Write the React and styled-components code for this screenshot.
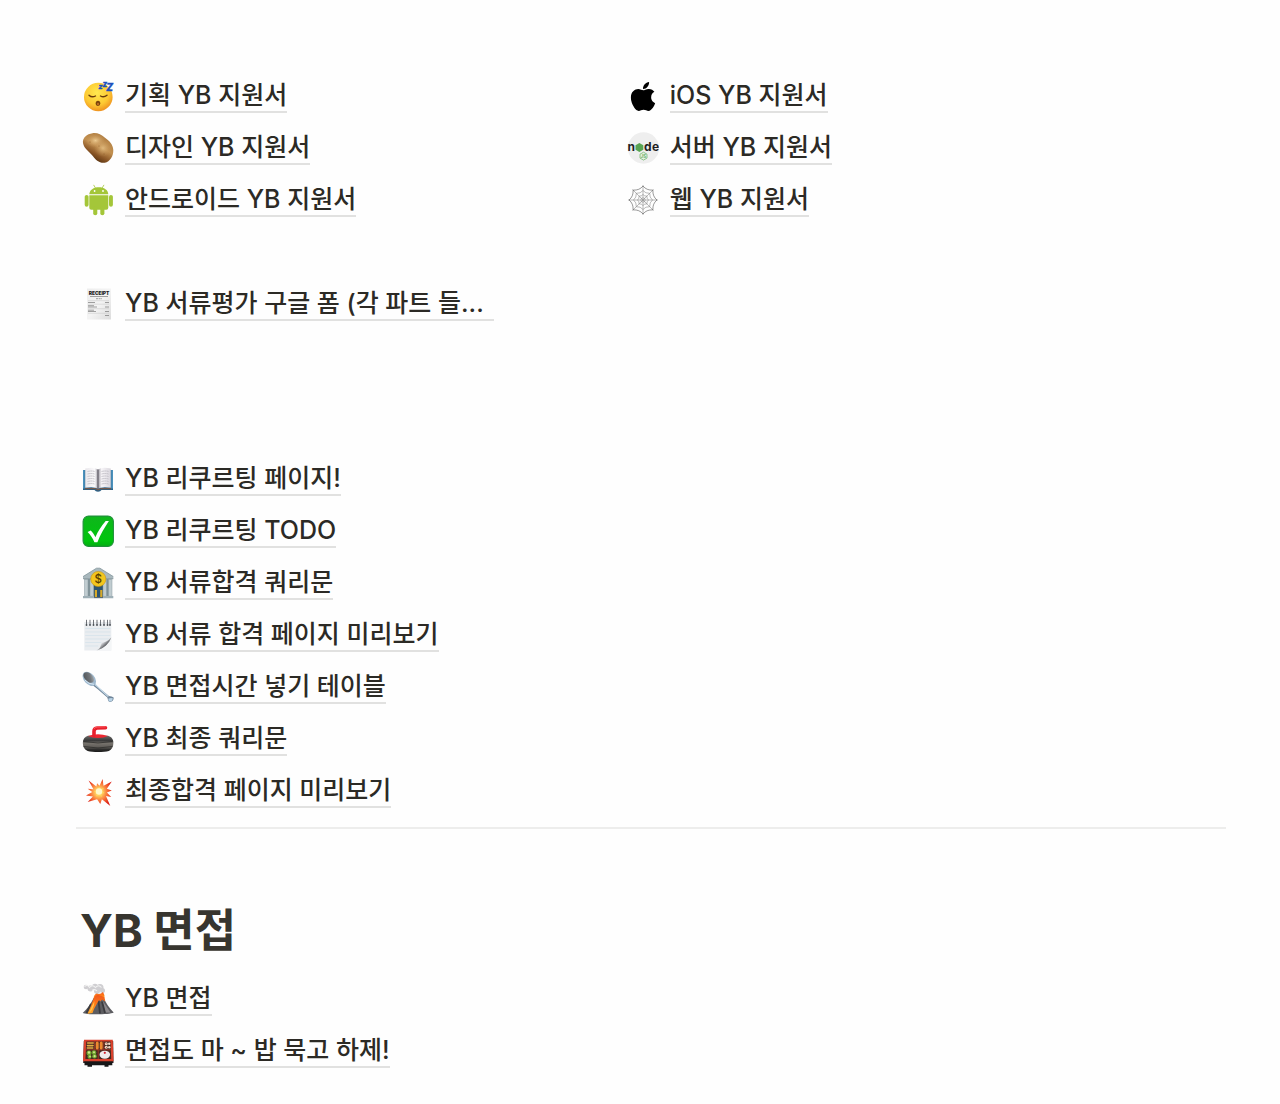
import React from "react";
import styled, { createGlobalStyle } from "styled-components";
import { FaApple } from "react-icons/fa";

function SleepingIcon() {
    return (
        <Icon viewBox="0 0 32 32">
            <defs>
                <radialGradient id="face" cx="45%" cy="35%" r="65%">
                    <stop offset="0" stopColor="#ffe94f" />
                    <stop offset="0.65" stopColor="#fdc933" />
                    <stop offset="1" stopColor="#ef9320" />
                </radialGradient>
            </defs>
            <circle cx="16.3" cy="17" r="14.3" fill="url(#face)" />
            <g fill="none" stroke="#6b3c0c" strokeWidth="1.4" strokeLinecap="round">
                <path d="M7 15.2q2.8 2.8 6.5 .8" />
                <path d="M18.5 16q3.2 2 6.5-.8" />
            </g>
            <ellipse cx="16" cy="23.3" rx="2.3" ry="2.6" fill="#7a430c" />
            <ellipse cx="16" cy="24" rx="1.1" ry="1.2" fill="#b96a20" />
            <g
                fill="#1d50bd"
                stroke="#1d50bd"
                strokeWidth="0.4"
                fontFamily="Inter, sans-serif"
                fontWeight="800"
                fontStyle="italic"
            >
                <text x="16.5" y="9" fontSize="7">z</text>
                <text x="20.5" y="7" fontSize="8">z</text>
                <text x="24.2" y="10.5" fontSize="10">Z</text>
            </g>
        </Icon>
    );
}

function PotatoIcon() {
    return (
        <Icon viewBox="0 0 32 32">
            <defs>
                <linearGradient id="potato" x1="0.75" y1="0.1" x2="0.3" y2="0.9">
                    <stop offset="0" stopColor="#b07e42" />
                    <stop offset="0.45" stopColor="#c29050" />
                    <stop offset="0.75" stopColor="#8a5626" />
                    <stop offset="1" stopColor="#54300f" />
                </linearGradient>
                <radialGradient id="potatoShine">
                    <stop offset="0" stopColor="#ecca90" />
                    <stop offset="1" stopColor="#c8975a" stopOpacity="0" />
                </radialGradient>
            </defs>
            <path
                d="M10.5 1.200c5-.7 8.500 1.600 12.500 4.500 4.500 3.200 8 6.500 8.300 12.300.2 6-3.300 11.800-8.500 12.700-5.500.6-9.300-2.700-12-6.700C7.500 19.500 2 17 1 11 .2 5.800 5 1.900 10.500 1.200z"
                fill="url(#potato)"
            />
            <ellipse cx="13.5" cy="8.5" rx="10" ry="7" fill="url(#potatoShine)" />
            <ellipse cx="21" cy="16" rx="9" ry="9" fill="url(#potatoShine)" opacity="0.7" />
            <g fill="#8c5a2a">
                <circle cx="8" cy="10" r="0.5" />
                <circle cx="17" cy="14" r="0.5" />
                <circle cx="22" cy="22" r="0.5" />
            </g>
        </Icon>
    );
}

function AndroidIcon() {
    return (
        <Icon viewBox="0 0 32 32" fill="#a4c639">
            <path d="M7.3 10.2C7.6 6 11.5 3.3 16.8 3.3s9.2 2.7 9.500 6.900z" />
            <path
                d="M11.8 1.200l1.900 3.200M21.800 1.200l-1.900 3.200"
                stroke="#a4c639"
                strokeWidth="0.8"
                strokeLinecap="round"
            />
            <circle cx="12.6" cy="7" r="0.9" fill="#fff" />
            <circle cx="21" cy="7" r="0.9" fill="#fff" />
            <path d="M7.3 11.200h19v12.600a2 2 0 0 1-2 2h-15a2 2 0 0 1-2-2z" />
            <rect x="2.7" y="10.9" width="3.9" height="11.8" rx="1.95" />
            <rect x="27" y="10.9" width="3.9" height="11.8" rx="1.95" />
            <rect x="11.2" y="22" width="4.1" height="9.3" rx="2.05" />
            <rect x="18.3" y="22" width="4.1" height="9.3" rx="2.05" />
        </Icon>
    );
}

function AppleIcon() {
    return (
        <LogoBox>
            <FaApple size={33} />
        </LogoBox>
    );
}

function NodeIcon() {
    return (
        <Icon viewBox="0 0 32 32">
            <circle cx="16.5" cy="16" r="15.7" fill="#eeeeee" />
            <g
                fill="#1f1f1f"
                fontFamily="Inter, sans-serif"
                fontWeight="700"
                fontSize="12"
            >
                <text x="0.4" y="18.5">n</text>
                <text x="17" y="18.5">d</text>
                <text x="25" y="18.5">e</text>
            </g>
            <path d="M12.4 11l3.900 2.200v4.500l-3.900 2.200-3.900-2.200v-4.500z" fill="#58a452" />
            <path
                d="M16.5 20.200l3.500 2v3.900l-3.500 2-3.500-2v-3.900z"
                fill="#e3f0e2"
                stroke="#83bf7e"
                strokeWidth="0.9"
            />
            <text
                x="16.5"
                y="25.8"
                fontSize="4.4"
                fontWeight="700"
                textAnchor="middle"
                fontFamily="Inter, sans-serif"
                fill="#69ad63"
            >
                JS
            </text>
        </Icon>
    );
}

function WebIcon() {
    return (
        <Icon viewBox="0 0 32 32" fill="none" stroke="#8a8a8a" strokeWidth="0.6">
            <path d="M16 1v30M1 16h30M5.400 5.400l21.200 21.200M26.600 5.400L5.400 26.600" />
            <path
                stroke="#555"
                d="M16 2q3.500 4.500 9.900 4.100Q25.500 12.500 30 16q-4.500 3.500-4.100 9.900Q19.500 25.500 16 30q-3.500-4.500-9.900-4.100Q6.500 19.500 2 16q4.500-3.500 4.100-9.900Q12.500 6.500 16 2z"
            />
            <path d="M16 6.500q2.500 3.200 6.700 2.800-.4 4.200 2.800 6.700-3.200 2.500-2.800 6.700-4.200-.4-6.700 2.800-2.500-3.200-6.700-2.800.4-4.200-2.800-6.700 3.200-2.500 2.800-6.700 4.200.4 6.700-2.800z" />
            <path d="M16 10.500q1.500 1.900 3.900 1.600-.3 2.400 1.600 3.900-1.900 1.500-1.600 3.900-2.400-.3-3.900 1.600-1.500-1.900-3.900-1.600.3-2.400-1.600-3.900 1.900-1.500 1.600-3.900 2.400.3 3.900-1.600z" />
            <circle cx="16" cy="16" r="2.2" />
        </Icon>
    );
}

function ReceiptIcon() {
    return (
        <Icon viewBox="0 0 32 32">
            <defs>
                <linearGradient id="receipt" x1="0" y1="0" x2="1" y2="1">
                    <stop offset="0" stopColor="#ededed" />
                    <stop offset="0.5" stopColor="#f4f4f4" />
                    <stop offset="1" stopColor="#dcdcdc" />
                </linearGradient>
            </defs>
            <rect x="5" y="0.5" width="24" height="31" fill="url(#receipt)" />
            <text
                x="17"
                y="6.8"
                fontSize="4.8"
                fontWeight="900"
                textAnchor="middle"
                fontFamily="Inter, sans-serif"
                fill="#222"
            >
                RECEIPT
            </text>
            <g stroke="#666" strokeWidth="0.6">
                <path d="M8 8.500h18" />
                <path d="M14 10.700h6" strokeDasharray="2 0.6" />
                <path d="M6 14.500h7M23 14.500h4M6 17.700h6M6 19h9M23 19h4M6 22.200h6M6 23.500h8M23 23.500h4M23 27.500h4" />
            </g>
            <path
                d="M6 12.700h21M6 16.200h21M6 20.700h21M6 25.300h21"
                stroke="#c4c4c4"
                strokeWidth="0.5"
            />
        </Icon>
    );
}

function BookIcon() {
    return (
        <Icon viewBox="0 0 32 32">
            <defs>
                <linearGradient id="page" x1="0" x2="1">
                    <stop offset="0" stopColor="#e9e7eb" />
                    <stop offset="0.38" stopColor="#fbfafc" />
                    <stop offset="0.48" stopColor="#aeabb3" />
                    <stop offset="0.54" stopColor="#b6b3bb" />
                    <stop offset="0.64" stopColor="#f7f5f8" />
                    <stop offset="1" stopColor="#d9d6dd" />
                </linearGradient>
            </defs>
            <path d="M1 7h30v20H19.500q-1 1.700-3.500 1.700T12.500 27H1z" fill="#2c6187" />
            <path d="M1 7h1.800v18.500H1zM29.200 7H31v18.500h-1.800z" fill="#4b91bc" />
            <path d="M3 25.700h10.500l2.500 1.300 2.500-1.300H29" stroke="#87583d" fill="none" />
            <path
                d="M3.200 5.500Q12 3.500 16 6.500q4-3 12.800-1v19.300Q19 23.500 16 26 13 23.500 3.200 24.800z"
                fill="url(#page)"
            />
            <g fill="none" stroke="#b3b0b9" strokeWidth="0.7" strokeDasharray="2.2 0.4">
                <path d="M5.500 8.500q4-1 7 0M5.500 11q4-1 7 0M5.500 13.500q4-1 7 0M5.500 16q4-1 7 0M5.500 18.500q4-1 7 0M5.500 21q4-1 7 0" />
                <path d="M19.500 8.500q4-1 7 0M19.500 11q4-1 7 0M19.500 13.500q4-1 7 0M19.500 16q4-1 7 0M19.500 18.500q4-1 7 0M19.500 21q4-1 7 0" />
            </g>
            <path d="M16 6.500V26" stroke="#4b4850" strokeWidth="0.9" />
        </Icon>
    );
}

function CheckIcon() {
    return (
        <Icon viewBox="0 0 32 32">
            <defs>
                <linearGradient id="check" x1="0" y1="0" x2="0" y2="1">
                    <stop offset="0" stopColor="#0fb51c" />
                    <stop offset="0.8" stopColor="#00c50d" />
                    <stop offset="1" stopColor="#03ae12" />
                </linearGradient>
            </defs>
            <rect
                x="1.1"
                y="1.1"
                width="30.3"
                height="30.3"
                rx="5.5"
                fill="url(#check)"
                stroke="#20903a"
                strokeWidth="1.1"
            />
            <path
                d="M5.600 17l3.200-1.400c1.900 1.900 3.300 4 4.600 6.700 2.600-5.900 6-11.300 10.300-16.200h3.200C22.200 13 18.500 19.600 15.400 27.200h-3c-1.700-3.900-3.800-7.300-6.800-10.200z"
                fill="#fff"
            />
        </Icon>
    );
}

function BankIcon() {
    return (
        <Icon viewBox="0 0 32 32">
            <path d="M3 12h26v18H3z" fill="#7e9097" />
            <path d="M12 13h9v17h-9z" fill="#2d5470" />
            <path d="M12.800 23h2.200v7.500h-2.200zM18.200 23h2.200v7.500h-2.200z" fill="#d8aa29" />
            <path d="M1 9.500L14.500 1.200h3.400L31.300 9.500v2.200H1z" fill="#a9b8bd" />
            <path d="M1 9.600L14.500 1.200h3.400L31.300 9.600" fill="none" stroke="#82949b" strokeWidth="0.8" />
            <path d="M1 11.700h30.300" stroke="#7b8d94" strokeWidth="0.8" />
            <g fill="#c0ccd0" stroke="#8a9aa1" strokeWidth="0.5">
                <rect x="2.5" y="12.2" width="3.5" height="17" />
                <rect x="8" y="12.2" width="3.5" height="17" />
                <rect x="21" y="12.2" width="3.5" height="17" />
                <rect x="26.5" y="12.2" width="3.5" height="17" />
            </g>
            <path d="M1 29h11v2.200H1zM21 29h10.300v2.200H21z" fill="#9eafb6" />
            <path d="M12 30.600h9" stroke="#5b6a73" strokeWidth="1.2" />
            <circle cx="16.3" cy="12" r="7.6" fill="#f3c61e" stroke="#c99510" strokeWidth="0.6" />
            <text
                x="16.3"
                y="16.2"
                fontSize="11.5"
                fontWeight="500"
                textAnchor="middle"
                fontFamily="Inter, sans-serif"
                fill="#594000"
            >
                $
            </text>
        </Icon>
    );
}

function NotepadIcon() {
    return (
        <Icon viewBox="0 0 32 32">
            <defs>
                <linearGradient id="curl" x1="0.1" y1="0.1" x2="0.9" y2="0.9">
                    <stop offset="0" stopColor="#fafafa" />
                    <stop offset="0.4" stopColor="#d5d7da" />
                    <stop offset="0.65" stopColor="#5c5e62" />
                </linearGradient>
            </defs>
            <path d="M2.300 3h27v28.500H2.300z" fill="#eaedf0" />
            <path d="M3.200 9.500h25.200M3.200 13h25.200M3.200 16.500h25.200M3.200 20h25.200M3.200 23.500h16M3.200 27h13" stroke="#d3e1ea" strokeWidth="0.7" />
            <path d="M14.500 31.500c4-1.500 3.800-5 5.300-7.800 3-.2 6.700-2.200 9.500-5.500v13.300z" fill="#f4f6f7" />
            <path d="M14.500 31.500c3.900-1.700 3.800-4.600 5.200-7.800 3.200-.2 6.500-1.800 9.600-5.500-2 6.300-7.300 11-14.800 13.300z" fill="url(#curl)" />
            <path d="M4.500 1.200v4.500M8 1.200v4.500M11.500 1.200v4.500M15 1.200v4.500M18.500 1.200v4.500M22 1.200v4.500M25.500 1.200v4.500M28 1.200v4.500" stroke="#4b4f55" strokeWidth="0.8" strokeLinecap="round" />
            <g fill="#4d5157">
                <circle cx="4.5" cy="6" r="0.9" />
                <circle cx="8" cy="6" r="0.9" />
                <circle cx="11.5" cy="6" r="0.9" />
                <circle cx="15" cy="6" r="0.9" />
                <circle cx="18.5" cy="6" r="0.9" />
                <circle cx="22" cy="6" r="0.9" />
                <circle cx="25.5" cy="6" r="0.9" />
                <circle cx="28" cy="6" r="0.9" />
            </g>
        </Icon>
    );
}

function SpoonIcon() {
    return (
        <Icon viewBox="0 0 32 32">
            <defs>
                <linearGradient id="bowl" x1="0" y1="0" x2="1" y2="1">
                    <stop offset="0" stopColor="#4a4e52" />
                    <stop offset="0.6" stopColor="#73777b" />
                    <stop offset="1" stopColor="#b6bcc1" />
                </linearGradient>
            </defs>
            <path
                d="M12 10.500c1 2.200 2.700 4.300 5.200 6.400l9.800 8.100c1.600.3 3.800.5 4.600 1.600.5 2.200-2 4.800-4.300 4.500-1.500-1-1.300-3-2-4.500L15.800 18.300c-2.100-2-4.200-3.600-6.400-4.600z"
                fill="#71869a"
            />
            <path d="M12.500 13l13.800 12.700" stroke="#c4d9e8" strokeWidth="1.1" />
            <path d="M26.300 27.800q2.500-1.300 4.700-.4-.3 2.400-3.500 3.400-1.200-.9-1.200-3z" fill="#b9d3e6" />
            <ellipse cx="7.3" cy="7.8" rx="5.3" ry="8.2" transform="rotate(-41 7.3 7.8)" fill="#9fb9ce" />
            <ellipse cx="6.7" cy="6.5" rx="4" ry="6.3" transform="rotate(-45 6.7 6.5)" fill="url(#bowl)" />
            <path d="M3 9q3.500 4.500 9 4.300" fill="none" stroke="#d6e8f5" strokeWidth="1" />
        </Icon>
    );
}

function CurlingIcon() {
    return (
        <Icon viewBox="0 0 32 32">
            <defs>
                <linearGradient id="stone" x1="0" y1="0" x2="0" y2="1">
                    <stop offset="0" stopColor="#686866" />
                    <stop offset="0.3" stopColor="#393939" />
                    <stop offset="0.45" stopColor="#77736d" />
                    <stop offset="0.7" stopColor="#5e5b57" />
                    <stop offset="0.85" stopColor="#2c2c2b" />
                    <stop offset="1" stopColor="#1a1a1a" />
                </linearGradient>
            </defs>
            <path
                d="M6 12.800h20c3.200.8 5.400 3.200 5.400 7.200s-1.800 6.900-4.600 8c-5 1.400-16.200 1.400-21.200 0C2.600 26.900.8 24 .8 20s2-6.400 5.200-7.200z"
                fill="url(#stone)"
            />
            <path d="M6 13Q16 9.500 26 13q-4 2-10 2T6 13z" fill="#ed2731" />
            <path
                d="M12 12.500V8.300q0-3 3.200-3.300l8.300-.2"
                fill="none"
                stroke="#e8202c"
                strokeWidth="3.6"
                strokeLinecap="round"
                strokeLinejoin="round"
            />
            <path d="M12.300 5.500q1-1.400 3-1.500l8-.2" fill="none" stroke="#ff6265" strokeWidth="0.9" strokeLinecap="round" />
            <path d="M1.500 18.500q14.500 3 29 0M1.500 23.500q14.500 3 29 0" fill="none" stroke="#282827" strokeWidth="0.7" />
        </Icon>
    );
}

function BoomIcon() {
    return (
        <Icon viewBox="0 0 32 32">
            <defs>
                <radialGradient id="boom" cx="50%" cy="48%" r="55%">
                    <stop offset="0" stopColor="#fff3a8" />
                    <stop offset="0.3" stopColor="#ffc05a" />
                    <stop offset="0.6" stopColor="#f9743a" />
                    <stop offset="1" stopColor="#dc1c12" />
                </radialGradient>
            </defs>
            <path
                d="M17.500 10.800L20.600 4l.9 6.700 8.300-4.200-5 7.200 5 1.800-4.900 2.100 4.300 4.300-5.200-.9 4.300 10-8.400-6.700-1.600 4.700-3.200-4.800-9.400 2.900 5.200-5.500-6.900-1 6.300-3.600-4.600-3.200 5.700.4-4.800-8.700 7.800 6 .7-3.300z"
                fill="url(#boom)"
            />
            <path d="M17.200 11.500l1.200 2.700 3.300-1.100-1.500 3 2.300 2-3.200.6.5 3.200-2.900-1.800-2.800 1.500.8-3.300-3-1.800 3.400-.8z" fill="#ffd65b" />
            <circle cx="17" cy="16.5" r="3.2" fill="#fff8cc" />
        </Icon>
    );
}

function VolcanoIcon() {
    return (
        <Icon viewBox="0 0 32 32">
            <defs>
                <linearGradient id="lava" x1="0" y1="0" x2="0" y2="1">
                    <stop offset="0" stopColor="#f0561c" />
                    <stop offset="0.5" stopColor="#ff7a16" />
                    <stop offset="1" stopColor="#ffa92b" />
                </linearGradient>
            </defs>
            <g fill="#cfced1">
                <circle cx="4" cy="4" r="2.3" />
                <circle cx="8.5" cy="5.5" r="3" />
                <circle cx="13" cy="3.8" r="3" />
                <circle cx="18" cy="4.5" r="3.5" />
                <circle cx="15" cy="8" r="3" />
                <circle cx="20.5" cy="7.5" r="2.5" />
            </g>
            <path d="M2.500 3.500q3-2.500 5 1 3-3.500 6 0 3-3.500 6 0M10 7.500q3-2 5 .5" fill="none" stroke="#f2f2f2" strokeWidth="1.1" />
            <path d="M11.500 15.500Q12 11 15 10.500q3 1.500 6-1.500 2 3 1.500 6z" fill="url(#lava)" />
            <path d="M11.700 15h10c2.300 5 5.500 10 10 14.500-4 2.300-27 2.500-31 .5 4.500-4 8-9 11-15z" fill="#5d5d61" />
            <path d="M19.500 16l9 13.500h-5z" fill="#8d8a8d" />
            <path d="M16.500 18l1.500 12.500M20 18.500l3 11.500M9 21l-4.500 9" stroke="#3b3b3f" strokeWidth="1.8" />
            <path d="M12 14.500Q13 11.500 16.500 12q3.500.5 6 2.500l.8 4-3.300-2-1.500 2-1.500-1.500-2.500 4.500-2.500 4.500-1.500 4-5 .8 3.500-8z" fill="url(#lava)" />
            <path d="M9.500 24l3-6-.5 4-2 5-3 3z" fill="#ffc34b" />
        </Icon>
    );
}

function BentoIcon() {
    return (
        <Icon viewBox="0 0 32 32">
            <path d="M1.800 6h29.400l.3 22H1.200z" fill="#292022" />
            <path d="M2.500 26h27.800v4.200h-3.800v1.600h-4v-1.600H10v1.600H5.500v-1.600h-3z" fill="#171718" />
            <path d="M2 4.800h28.800l.7 21.500H1z" fill="#d9412c" />
            <path d="M4.300 6.500h24.200l.7 17.500H3.400z" fill="#42291f" />
            <path d="M16.200 14.800V24M3.800 14.800h25M12.700 6.500v8M21.800 6.500v8" stroke="#b5382a" strokeWidth="0.8" />
            <path d="M5.700 8h5.500M5.500 10.600h5.500M5.300 13h5.500" stroke="#e6ad45" strokeWidth="1.6" strokeLinecap="round" />
            <path d="M15.200 8v5M19.200 8v5" stroke="#ee8830" strokeWidth="3" strokeLinecap="round" />
            <g fill="#f0dccb">
                <circle cx="24.3" cy="8.7" r="1.5" />
                <circle cx="27.2" cy="8.7" r="1.2" />
                <circle cx="24.3" cy="12.3" r="1.5" />
                <circle cx="27.3" cy="12.3" r="1.2" />
            </g>
            <path d="M24 8.300l.8.8M24 12l.8.8" stroke="#c14a3a" strokeWidth="1" />
            <g fill="#6fa52f">
                <circle cx="7" cy="18" r="2.5" />
                <circle cx="12" cy="17.5" r="2.3" />
                <circle cx="7.5" cy="21.8" r="2" />
                <circle cx="12.5" cy="21.3" r="2.3" />
            </g>
            <g fill="#cfe58a">
                <circle cx="7" cy="17.5" r="1.2" />
                <circle cx="12" cy="17.2" r="1" />
                <circle cx="8" cy="21.5" r="0.9" />
                <circle cx="12.6" cy="21.2" r="1.1" />
            </g>
            <ellipse cx="22.8" cy="19.7" rx="5.3" ry="4" fill="#efebea" />
            <circle cx="22.8" cy="17.8" r="1.1" fill="#d3202c" />
        </Icon>
    );
}

const applyLeft = [
    { icon: <SleepingIcon />, title: "기획 YB 지원서" },
    { icon: <PotatoIcon />, title: "디자인 YB 지원서" },
    { icon: <AndroidIcon />, title: "안드로이드 YB 지원서" },
];

const applyRight = [
    { icon: <AppleIcon />, title: "iOS YB 지원서" },
    { icon: <NodeIcon />, title: "서버 YB 지원서" },
    { icon: <WebIcon />, title: "웹 YB 지원서" },
];

const forms = [
    { icon: <ReceiptIcon />, title: "YB 서류평가 구글 폼 (각 파트 들..." },
];

const recruiting = [
    { icon: <BookIcon />, title: "YB 리쿠르팅 페이지!" },
    { icon: <CheckIcon />, title: "YB 리쿠르팅 TODO" },
    { icon: <BankIcon />, title: "YB 서류합격 쿼리문" },
    { icon: <NotepadIcon />, title: "YB 서류 합격 페이지 미리보기" },
    { icon: <SpoonIcon />, title: "YB 면접시간 넣기 테이블" },
    { icon: <CurlingIcon />, title: "YB 최종 쿼리문" },
    { icon: <BoomIcon />, title: "최종합격 페이지 미리보기" },
];

const interview = [
    { icon: <VolcanoIcon />, title: "YB 면접" },
    { icon: <BentoIcon />, title: "면접도 마 ~ 밥 묵고 하제!" },
];

function PageList({ pages, fill }) {
    return (
        <List>
            {pages.map((page) => (
                <Item key={page.title}>
                    <PageLink href="#">
                        {page.icon}
                        <Title $fill={fill}>{page.title}</Title>
                    </PageLink>
                </Item>
            ))}
        </List>
    );
}

function App() {
    return (
        <>
            <GlobalStyle />
            <Page>
                <Columns>
                    <PageList pages={applyLeft} />
                    <PageList pages={applyRight} />
                </Columns>
                <FormSection>
                    <PageList pages={forms} fill />
                </FormSection>
                <PageList pages={recruiting} />
                <Divider />
                <Heading>YB 면접</Heading>
                <PageList pages={interview} />
            </Page>
        </>
    );
}

export default App;

const GlobalStyle = createGlobalStyle`
    * {
        box-sizing: border-box;
    }
    body {
        margin: 0;
        background: #fefefe;
        color: #37352f;
        font-family: Inter, "Noto Sans CJK KR", sans-serif;
    }
`;
const Page = styled.main`
    padding: 70px 54px 10px 76px;
`;
const Columns = styled.div`
    display: grid;
    grid-template-columns: 9fr 10fr;
`;
const FormSection = styled.section`
    max-width: 418px;
    margin: 52px 0 123px;
`;
const List = styled.ul`
    list-style: none;
    margin: 0;
    padding: 0;
`;
const Item = styled.li`
    height: 52px;
    padding-left: 6px;
    display: flex;
    align-items: center;
`;
const PageLink = styled.a`
    flex: 1;
    display: flex;
    align-items: center;
    gap: 11px;
    color: #2c2a25;
    text-decoration: none;
`;
const Icon = styled.svg.attrs({ "aria-hidden": true })`
    width: 32px;
    height: 32px;
    flex-shrink: 0;
`;
const LogoBox = styled.span`
    width: 32px;
    height: 32px;
    flex-shrink: 0;
    display: flex;
    align-items: center;
    justify-content: center;
    color: #000;
`;
const Title = styled.span`
    flex: ${(props) => (props.$fill ? "1" : "none")};
    height: 34px;
    border-bottom: 2px solid #e1e1e0;
    font-size: 25px;
    font-weight: 500;
    line-height: 33px;
    white-space: nowrap;
`;
const Divider = styled.hr`
    height: 2px;
    margin: 10px 0 0;
    border: 0;
    background: #ededec;
`;
const Heading = styled.h1`
    margin: 70px 0 10px;
    padding-left: 4px;
    font-size: 45px;
    font-weight: 700;
    line-height: 64px;
`;
